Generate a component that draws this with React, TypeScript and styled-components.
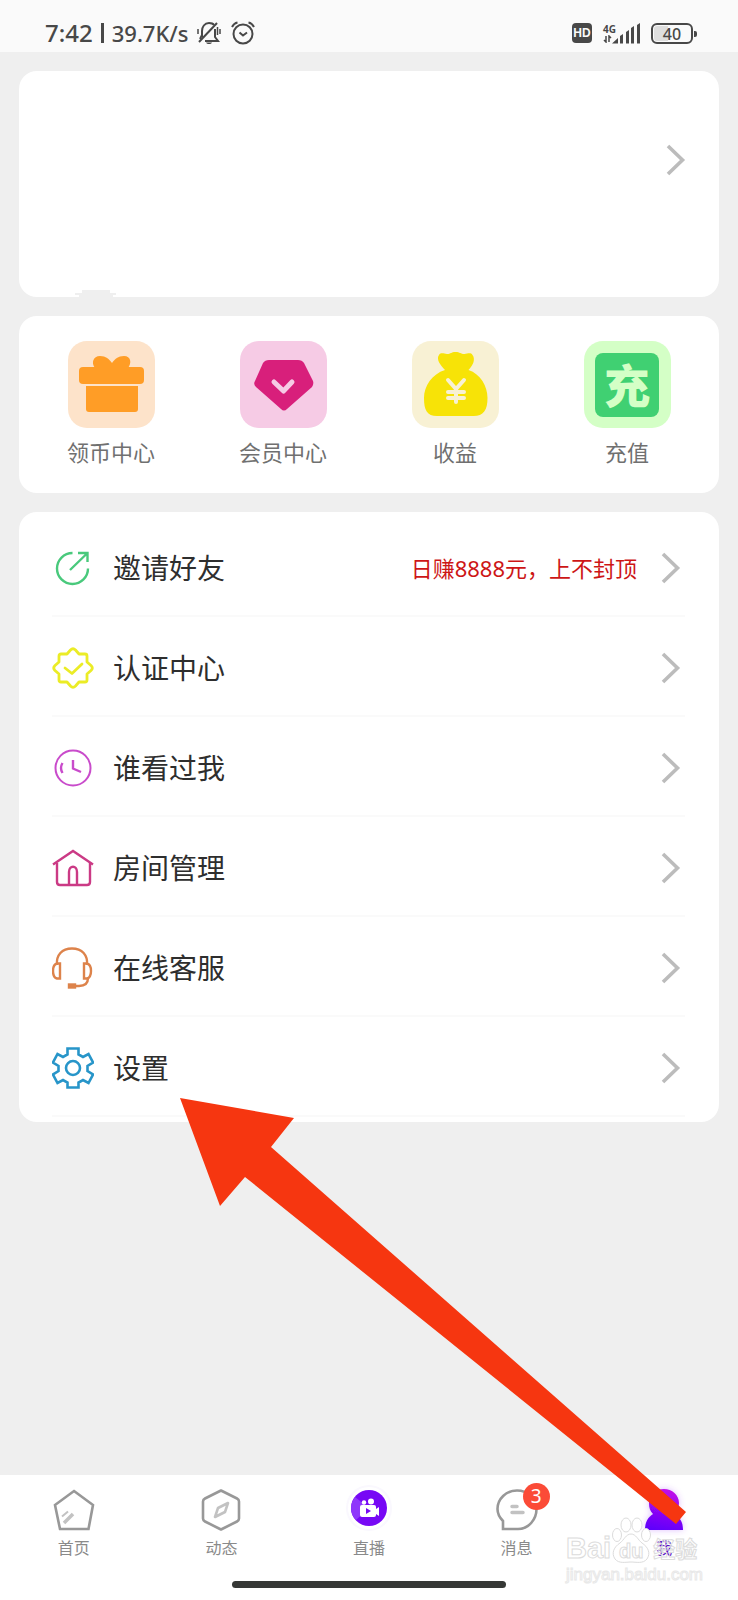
import React from "react";
import styled, { createGlobalStyle } from "styled-components";

const GlobalStyle = createGlobalStyle`
  *, *::before, *::after { box-sizing: border-box; }
  body {
    margin: 0;
    background: #efefef;
    font-family: "Noto Sans", "Noto Sans CJK SC", sans-serif;
    color: #2e2e2e;
  }
  button {
    margin: 0;
    border: 0;
    padding: 0;
    background: none;
    color: inherit;
    font: inherit;
    cursor: pointer;
  }
  svg { display: block; flex: none; }
`;

const Screen = styled.div`
  position: relative;
  display: flex;
  flex-direction: column;
  min-height: 100vh;
  overflow: hidden;
`;

const StatusBar = styled.header`
  display: flex;
  justify-content: space-between;
  align-items: center;
  height: 52px;
  padding: 14px 45px 0 45px;
  background: #fafafa;
  color: #484848;
`;

const StatusGroup = styled.div<{ $gap: number }>`
  display: flex;
  align-items: center;
  gap: ${(p) => p.$gap}px;
`;

const StatusText = styled.span<{ $size: number }>`
  font-size: ${(p) => p.$size}px;
  line-height: 32px;
  font-weight: 500;
`;

const StatusDivider = styled.span`
  width: 3px;
  height: 20px;
  background: #484848;
`;

const HdMark = styled.span`
  width: 20px;
  height: 20px;
  border-radius: 4px;
  background: #484848;
  color: #fafafa;
  font: 700 12px/20px "Liberation Sans", sans-serif;
  text-align: center;
`;

const Network = styled.span`
  display: flex;
  flex-direction: column;
  align-items: flex-start;
  margin-right: -4px;
  font-size: 10px;
  font-weight: 700;
  line-height: 12px;
`;

const Battery = styled.span`
  position: relative;
  width: 42px;
  height: 21px;
  border: 2px solid #484848;
  border-radius: 6px;
  box-shadow: inset 0 0 0 1px #fafafa;
  background: linear-gradient(to right, #dedede 40%, #fafafa 40%);
  font: 500 16px/18px "Noto Sans", sans-serif;
  text-align: center;

  &::after {
    content: "";
    position: absolute;
    top: 6px;
    right: -6px;
    width: 3px;
    height: 6px;
    border-radius: 0 2px 2px 0;
    background: #484848;
  }
`;

const Main = styled.main`
  display: flex;
  flex-direction: column;
  gap: 19px;
  padding: 19px;
`;

const Card = styled.section`
  border-radius: 18px;
  background: #fff;
`;

const ProfileCard = styled(Card)`
  position: relative;
  display: flex;
  justify-content: flex-end;
  height: 226px;
  padding: 73px 33px 0 0;
`;

const ProfileNotch = styled.svg`
  position: absolute;
  left: 56px;
  bottom: 0;
`;

const ArrowButton = styled.button`
  height: 32px;
`;

const ShortcutCard = styled(Card)`
  display: grid;
  grid-template-columns: repeat(4, 1fr);
  padding: 25px 6px 25px;
`;

const Shortcut = styled.button`
  display: flex;
  flex-direction: column;
  align-items: center;
  gap: 8px;
  color: #707070;
  font-size: 22px;
  line-height: 32px;
`;

const Tile = styled.span<{ $bg: string }>`
  display: flex;
  width: 87px;
  height: 87px;
  border-radius: 19px;
  background: ${(p) => p.$bg};
`;

const RechargeFace = styled.span`
  width: 64px;
  height: 64px;
  margin: auto;
  border-radius: 8px;
  background: #40d072;
  color: #d4ffc6;
  font: 900 46px/60px "Noto Sans CJK SC", sans-serif;
  text-align: center;
`;

const MenuCard = styled(Card)`
  padding: 5px 34px 5px 33px;
`;

const MenuRow = styled.button`
  display: flex;
  align-items: center;
  width: 100%;
  height: 100px;
  border-bottom: 2px solid #fafafa;
  padding: 3px 4px 0 0;
  text-align: left;
`;

const MenuLabel = styled.span`
  flex: 1;
  margin-left: 19px;
  font-size: 28px;
  line-height: 40px;
`;

const MenuNote = styled.span`
  margin-right: 24px;
  color: #cd1616;
  font-size: 22px;
  line-height: 32px;
`;

const Footer = styled.footer`
  margin-top: auto;
  height: 125px;
  padding-top: 14px;
  background: #fff;
`;

const Tabs = styled.nav`
  display: grid;
  grid-template-columns: repeat(5, 1fr);
`;

const Tab = styled.button<{ $active?: boolean }>`
  display: flex;
  flex-direction: column;
  align-items: center;
  gap: 5px;
  color: ${(p) => (p.$active ? "#5a12c8" : "#8a8a8a")};
  font-size: 16px;
  line-height: 24px;
`;

const TabIcon = styled.span`
  position: relative;
  width: 42px;
  height: 42px;

  svg { overflow: visible; }
`;

const Badge = styled.span`
  position: absolute;
  top: -6px;
  right: -12px;
  width: 27px;
  height: 27px;
  border-radius: 50%;
  background: #fb4b37;
  color: #fff;
  font-size: 19px;
  line-height: 27px;
  text-align: center;
`;

const HomeIndicator = styled.div`
  width: 37%;
  height: 7px;
  margin: 21px auto 0;
  border-radius: 4px;
  background: #363836;
`;

const Pointer = styled.svg`
  position: absolute;
  left: 180px;
  top: 1097px;
  pointer-events: none;
`;

const Watermark = styled.div`
  position: absolute;
  right: 37px;
  bottom: 15px;
  width: 135px;
  color: transparent;
  pointer-events: none;
`;

const WatermarkName = styled.div`
  display: flex;
  align-items: flex-end;
  height: 48px;
  font: 700 29px/34px "Liberation Sans", "Noto Sans CJK SC", sans-serif;
  -webkit-text-stroke: 1px #dcdcdc;
`;

const Paw = styled.span`
  position: relative;
  width: 40px;
  height: 48px;
`;

const PawText = styled.span`
  position: absolute;
  left: 0;
  right: 0;
  bottom: 2px;
  font-size: 20px;
  line-height: 24px;
  text-align: center;
`;

const WatermarkCjk = styled.span`
  margin-left: 2px;
  font-size: 22px;
  line-height: 30px;
`;

const WatermarkUrl = styled.div`
  color: #fff;
  font: 400 17px/20px "Liberation Sans", sans-serif;
  -webkit-text-stroke: 1px #e8e8e8;
`;

const Chevron = () => (
  <svg width="20" height="32" viewBox="0 0 20 32" fill="none" stroke="#bcbcbc" strokeWidth="3.6">
    <path d="M2 2 16.500 16 2 30" />
  </svg>
);

const MutedBell = () => (
  <svg width="24" height="24" viewBox="0 0 24 24" fill="none" stroke="#484848" strokeWidth="2">
    <path d="M5 16V10c0-4 2.500-8 7-8 2 0 4 .5 5 2M18 8v8l3 4H8" />
    <path d="M5 14l-2 4" />
    <path d="M2 21 20 2" />
    <path d="M9 21.500h6c-1 2-5 2-6 0Z" fill="#484848" stroke="none" />
    <path d="M1 8v5M23 8v5M20.500 6v8" strokeWidth="1.500" />
  </svg>
);

const AlarmClock = () => (
  <svg width="24" height="24" viewBox="0 0 24 24" fill="none" stroke="#484848" strokeWidth="2">
    <circle cx="12" cy="13" r="9.500" />
    <path d="M1 6C2 4 4 2 6.500 1.500M23 6C22 4 20 2 17.500 1.500" />
    <path d="m8.500 11.500 3.500 3 4-3" />
  </svg>
);

const DataArrows = () => (
  <svg width="9" height="8" viewBox="0 0 9 8" fill="none" stroke="#484848" strokeWidth="1.5">
    <path d="M3 1v6L1 5M6 7V1l2 2" />
  </svg>
);

const SignalBars = () => (
  <svg width="28" height="21" viewBox="0 0 28 21" fill="#484848">
    <path d="M0 20.500 6 15V20.500ZM8 13l3-2v9.500H8ZM14 9l3-2v13.500h-3ZM19 5l3-2v17.500h-3ZM25 2l3-2v20.500h-3Z" />
  </svg>
);

const GiftIcon = () => (
  <svg width="87" height="87" viewBox="0 0 87 87" fill="#ff9d26">
    <path d="M27 27c-4-5-2-12 5-12 6 0 9 3 12 7 3-4 6-7 12-7 7 0 8 7 4 12Z" />
    <rect x="11" y="26" width="65" height="17" rx="4" />
    <path d="M18 45h52v23a3 3 0 0 1-3 3H21a3 3 0 0 1-3-3Z" />
  </svg>
);

const DiamondIcon = () => (
  <svg width="87" height="87" viewBox="0 0 87 87">
    <path
      d="M29 19h29q4 0 6 3l9 18q1 3-1 6L47 68q-3 3-6 0L16 46q-3-3-1-6l8-18q2-3 6-3Z"
      fill="#d81f7b"
    />
    <path d="m34 41 9.500 9L52 41" fill="none" stroke="#f6cbe5" strokeWidth="5" strokeLinecap="round" strokeLinejoin="round" />
  </svg>
);

const MoneyBagIcon = () => (
  <svg width="87" height="87" viewBox="0 0 87 87">
    <path
      d="M33 29c-5-5-9-11-6-15 2-3 5-1 8-1 4 0 4-2 8.500-2s5 2 9 2c3 0 6-2 8 1 3 4 1 10-4 15 12 4 19 16 19 28 0 12-4 18-14 18H25c-10 0-13-6-13-18 0-12 8-24 21-28Z"
      fill="#f7e307"
    />
    <path d="m36 39 8 9 8-9M44 48v13M36 51h16M36 57h16" fill="none" stroke="#f8f1d4" strokeWidth="4" strokeLinecap="round" />
  </svg>
);

const line = (color: string, width: number) => ({
  width: 42,
  height: 42,
  viewBox: "0 0 42 42",
  fill: "none",
  stroke: color,
  strokeWidth: width,
});

const ShareIcon = () => (
  <svg {...line("#49c97c", 2.4)}>
    <path d="M20.500 6A15.500 15.500 0 1 0 36 21.500" />
    <path d="M18 23 35 6.500M26 6h9.500v9" />
  </svg>
);

const VerifiedIcon = () => (
  <svg {...line("#ebec26", 2.8)} strokeLinejoin="round" strokeLinecap="round">
    <path d="M18.500 3q2.500-2.500 5 0l3.500 4h6q2 0 2 2v6l4 3.500q2.500 2.500 0 5L35 27v6q0 2-2 2h-6l-3.500 4q-2.500 2.500-5 0L15 35H9q-2 0-2-2v-6l-4-3.500q-2.500-2.500 0-5L7 15V9q0-2 2-2h6Z" />
    <path d="m13 21 7 5.500 10-9.500" />
  </svg>
);

const VisitorsIcon = () => (
  <svg {...line("#c94bcb", 2)}>
    <circle cx="21" cy="21" r="17.500" />
    <path d="M21 13v8.500l8 3.500M10.500 16q-3 5 0 10" strokeWidth="2.400" />
  </svg>
);

const RoomIcon = () => (
  <svg {...line("#cb3a85", 2.4)}>
    <path d="M1 17.500 21 4l20 13.500" />
    <path d="M5 16v19q0 3 3 3h27q3 0 3-3V16" />
    <path d="M17 38V25c0-7 8-7 8 0v13" />
  </svg>
);

const SupportIcon = () => (
  <svg {...line("#dd834b", 2.4)}>
    <path d="M5 18C4 8 10 1.500 20 1.500s16 6.500 15 16.500M36 31q0 8-9 8h-5" />
    <path d="M8 16.500v15H5q-4-1-4-7.500t4-7.500ZM32 16.500v15h3q4-1 4-7.500t-4-7.500Z" />
    <rect x="17" y="37.500" width="6" height="3" fill="#dd834b" />
  </svg>
);

const SettingsIcon = () => (
  <svg {...line("#2795c9", 2.6)}>
    <path d="M15.500 1.500h11v6l4.500 2.500 5.500-3 4.500 8.500-5.500 3.500v5l5.500 3.500-4.500 8.500-5.500-3-4.500 2.500v5h-11v-5L11 33l-5.500 3L1 27.500 6.500 24v-5L1 15.500 5.500 7l5.500 3 4.500-2.500Z" />
    <circle cx="21" cy="21" r="7" />
  </svg>
);

const HomeIcon = () => (
  <svg {...line("#989898", 2.6)}>
    <path d="M21 2 40 16 35.500 40H7L2 16Z" />
    <path d="M9 27.500 15 22.500" stroke="#c2c2c2" strokeWidth="2" />
    <path d="m11 34 9-9" stroke="#c2c2c2" strokeWidth="3.500" />
  </svg>
);

const FeedIcon = () => (
  <svg {...line("#989898", 2.6)} strokeLinejoin="round">
    <path d="m21 1.500 16 8q2 1 2 3v17q0 2-2 3l-16 8-16-8q-2-1-2-3v-17q0-2 2-3Z" />
    <path d="M28 14 25 23 15 28 18 19Z" stroke="#c2c2c2" />
  </svg>
);

const LiveIcon = () => (
  <svg width="42" height="42" viewBox="0 0 42 42">
    <circle cx="21" cy="19" r="22" fill="#fff" stroke="#faf8fe" strokeWidth="2" />
    <circle cx="21" cy="19" r="18" fill="#7708f5" />
    <path d="M21 19 7 8A18 18 0 0 0 3 19q0 7 5 12Z" fill="#8f38fb" />
    <g fill="#fff">
      <circle cx="16" cy="13.500" r="2.200" />
      <circle cx="23" cy="12.500" r="3" />
      <rect x="12" y="16" width="16" height="12" rx="2" />
      <path d="m28 20 3-2v9l-3-2Z" />
    </g>
    <path d="m18 19 5 3-5 3Z" fill="#7708f5" />
  </svg>
);

const MessageIcon = () => (
  <svg {...line("#989898", 2.6)}>
    <path d="M7 40v-8C3 28 1.500 25 1.500 20 1.500 10 10 1.500 21 1.500S40.500 10 40.500 20 33 40 22 40Z" />
    <path d="M16 17.500h5M16 23.500h11" stroke="#c2c2c2" strokeWidth="3.500" strokeLinecap="round" />
  </svg>
);

const ProfileIcon = () => (
  <svg width="42" height="42" viewBox="0 0 42 42">
    <defs>
      <linearGradient id="profile" x1="0.6" y1="0" x2="0.4" y2="1">
        <stop offset="0" stopColor="#c30be8" />
        <stop offset="1" stopColor="#6103fb" />
      </linearGradient>
      <filter id="glow" x="-30%" y="-30%" width="160%" height="160%">
        <feDropShadow dx="0" dy="0" stdDeviation="3" floodColor="#a040ff" floodOpacity="0.350" />
      </filter>
    </defs>
    <path
      d="M21 0c8 0 15 6 15 14 0 5-2 8-5 11 6 3 9 8 9 16H2c0-8 3-13 8-16-3-3-4-6-4-11C6 6 13 0 21 0Z"
      fill="url(#profile)"
      filter="url(#glow)"
    />
  </svg>
);

const shortcuts = [
  { label: "领币中心", bg: "#fde3ca", art: <GiftIcon /> },
  { label: "会员中心", bg: "#f6cbe5", art: <DiamondIcon /> },
  { label: "收益", bg: "#f8f1d4", art: <MoneyBagIcon /> },
  { label: "充值", bg: "#d4ffc6", art: <RechargeFace aria-hidden="true">充</RechargeFace> },
];

const menu = [
  { label: "邀请好友", icon: <ShareIcon />, note: "日赚8888元，上不封顶" },
  { label: "认证中心", icon: <VerifiedIcon /> },
  { label: "谁看过我", icon: <VisitorsIcon /> },
  { label: "房间管理", icon: <RoomIcon /> },
  { label: "在线客服", icon: <SupportIcon /> },
  { label: "设置", icon: <SettingsIcon /> },
];

const tabs = [
  { label: "首页", icon: <HomeIcon /> },
  { label: "动态", icon: <FeedIcon /> },
  { label: "直播", icon: <LiveIcon /> },
  { label: "消息", icon: <MessageIcon />, badge: 3 },
  { label: "我", icon: <ProfileIcon />, active: true },
];

export default function App() {
  return (
    <Screen>
      <GlobalStyle />
      <StatusBar>
        <StatusGroup $gap={8}>
          <StatusText $size={24}>7:42</StatusText>
          <StatusDivider />
          <StatusText $size={22}>39.7K/s</StatusText>
          <StatusGroup $gap={10}>
            <MutedBell />
            <AlarmClock />
          </StatusGroup>
        </StatusGroup>
        <StatusGroup $gap={11}>
          <HdMark>HD</HdMark>
          <StatusGroup $gap={0}>
            <Network>
              4G
              <DataArrows />
            </Network>
            <SignalBars />
          </StatusGroup>
          <Battery>40</Battery>
        </StatusGroup>
      </StatusBar>

      <Main>
        <ProfileCard>
          <ArrowButton aria-label="个人资料">
            <Chevron />
          </ArrowButton>
          <ProfileNotch width="42" height="7" viewBox="0 0 42 7" fill="#efefef">
            <path d="M0 3h7V0h28v3h6v2h-3v2H4V5H0Z" />
          </ProfileNotch>
        </ProfileCard>

        <ShortcutCard>
          {shortcuts.map((item) => (
            <Shortcut key={item.label}>
              <Tile $bg={item.bg}>{item.art}</Tile>
              {item.label}
            </Shortcut>
          ))}
        </ShortcutCard>

        <MenuCard>
          {menu.map((item) => (
            <MenuRow key={item.label}>
              {item.icon}
              <MenuLabel>{item.label}</MenuLabel>
              {item.note && <MenuNote>{item.note}</MenuNote>}
              <Chevron />
            </MenuRow>
          ))}
        </MenuCard>
      </Main>

      <Footer>
        <Tabs>
          {tabs.map((tab) => (
            <Tab key={tab.label} $active={tab.active}>
              <TabIcon>
                {tab.icon}
                {tab.badge && <Badge>{tab.badge}</Badge>}
              </TabIcon>
              {tab.label}
            </Tab>
          ))}
        </Tabs>
        <HomeIndicator />
      </Footer>

      <Pointer width="508" height="430" viewBox="0 0 508 430" fill="#f63610">
        <path d="M0 1 114 21 91 50 506 415 496 427 65 80 40 109Z" />
      </Pointer>

      <Watermark>
        <WatermarkName>
          <span>Bai</span>
          <Paw>
            <svg width="40" height="48" viewBox="0 0 40 48" fill="#fff" stroke="#dcdcdc">
              <ellipse cx="6" cy="18" rx="4.500" ry="6.500" />
              <ellipse cx="15" cy="8" rx="5" ry="7" />
              <ellipse cx="26" cy="8" rx="5" ry="7" />
              <ellipse cx="35" cy="18" rx="4.500" ry="6.500" />
              <path d="M20 17c5 0 7 6 11 9 6 4 9 10 5 16-4 5-11 3-16 3s-12 2-16-3c-4-6-1-12 5-16 4-3 6-9 11-9Z" />
            </svg>
            <PawText>du</PawText>
          </Paw>
          <WatermarkCjk>经验</WatermarkCjk>
        </WatermarkName>
        <WatermarkUrl>jingyan.baidu.com</WatermarkUrl>
      </Watermark>
    </Screen>
  );
}
